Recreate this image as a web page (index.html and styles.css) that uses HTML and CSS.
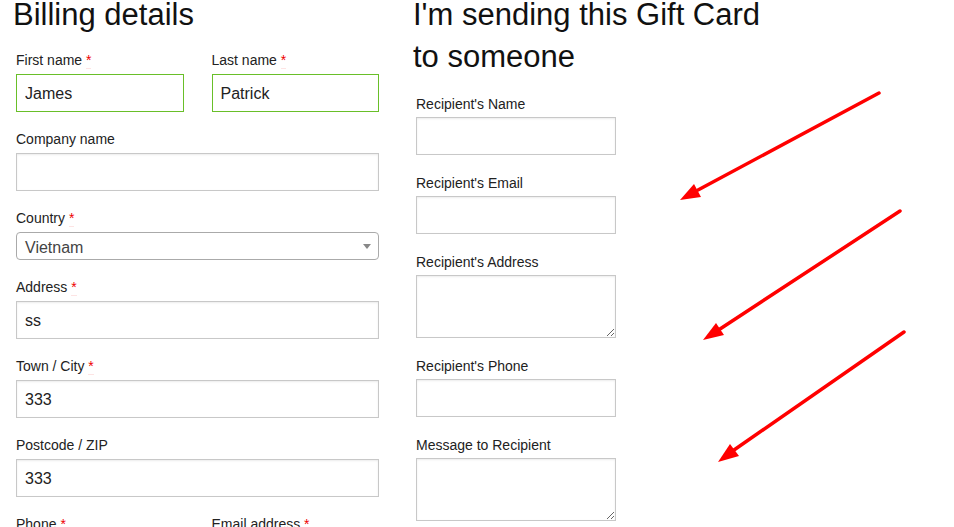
FILE: index.html
```html
<!DOCTYPE html>
<html lang="en">
<head>
  <meta charset="UTF-8" />
  <title>Checkout</title>
  <link rel="stylesheet" href="styles.css">
</head>
<body>

<div class="checkout">
  <div class="col billing">
    <h3>Billing details</h3>

    <div class="row-2">
      <p class="field">
        <label>First name <abbr class="required" title="required">*</abbr></label>
        <input type="text" class="valid" value="James">
      </p>
      <p class="field">
        <label>Last name <abbr class="required" title="required">*</abbr></label>
        <input type="text" class="valid" value="Patrick">
      </p>
    </div>

    <p class="field">
      <label>Company name</label>
      <input type="text" value="">
    </p>

    <p class="field">
      <label>Country <abbr class="required" title="required">*</abbr></label>
      <span class="select-box">Vietnam<span class="select-arrow"></span></span>
    </p>

    <p class="field">
      <label>Address <abbr class="required" title="required">*</abbr></label>
      <input type="text" value="ss">
    </p>

    <p class="field">
      <label>Town / City <abbr class="required" title="required">*</abbr></label>
      <input type="text" value="333">
    </p>

    <p class="field">
      <label>Postcode / ZIP</label>
      <input type="text" value="333">
    </p>

    <div class="row-2">
      <p class="field">
        <label>Phone <abbr class="required" title="required">*</abbr></label>
        <input type="text" value="">
      </p>
      <p class="field">
        <label>Email address <abbr class="required" title="required">*</abbr></label>
        <input type="text" value="">
      </p>
    </div>
  </div>

  <div class="col gift">
    <h3>I'm sending this Gift Card to someone</h3>

    <div class="gift-fields">
      <p class="gift-field">
        <label>Recipient's Name</label>
        <input type="text">
      </p>
      <p class="gift-field">
        <label>Recipient's Email</label>
        <input type="text">
      </p>
      <p class="gift-field">
        <label>Recipient's Address</label>
        <textarea></textarea>
      </p>
      <p class="gift-field">
        <label>Recipient's Phone</label>
        <input type="text">
      </p>
      <p class="gift-field">
        <label>Message to Recipient</label>
        <textarea></textarea>
      </p>
    </div>
  </div>
</div>

<!-- annotation arrows drawn over the screenshot -->
<svg class="arrows" width="954" height="527" viewBox="0 0 954 527">
  <g stroke="#ff0000" stroke-width="3.5" stroke-linecap="round">
    <line x1="879" y1="93" x2="698" y2="190" />
    <line x1="900" y1="211" x2="720" y2="329" />
    <line x1="904" y1="332" x2="734" y2="450" />
  </g>
  <g fill="#ff0000">
    <polygon points="680,200 701,197 694,184" />
    <polygon points="703,340 724,335 716,323" />
    <polygon points="718,462 739,456 730,444" />
  </g>
</svg>

</body>
</html>
```

FILE: styles.css
```css
body {
  margin: 0;
  background: #fff;
  color: #333;
  font-family: "Liberation Sans", Arial, sans-serif;
  overflow: hidden;
}
.checkout {
  display: flex;
  gap: 37px;
  padding-left: 16px;
}
.col {
  width: 363px;
  flex: none;
}
h3 {
  font-weight: normal;
  font-size: 31px;
  color: #111;
  margin: 0;
}
.billing h3 {
  line-height: 30px;
  margin: 0 0 20px -3px;
}
.gift h3 {
  line-height: 42px;
  margin: -6px 0 16px -3px;
}
.row-2 {
  display: flex;
  gap: 28px;
}
.row-2 .field {
  flex: 1;
}
.field {
  margin: 0 0 17px;
}
label {
  display: block;
  font-size: 14px;
  line-height: 20px;
  color: #222;
  margin-bottom: 4px;
}
abbr.required {
  color: #e00;
  text-decoration: none;
  border-bottom: 1px solid #fde4e4;
}
input, textarea, .select-box {
  display: block;
  box-sizing: border-box;
  width: 100%;
  font-family: "Liberation Sans", Arial, sans-serif;
  font-size: 16px;
  color: #222;
  background: #fff;
  border: 1px solid #c8c8c8;
  box-shadow: inset 0 1px 2px rgba(0, 0, 0, 0.08);
  margin: 0;
}
input {
  height: 38px;
  padding: 1px 8px 0;
  outline: none;
}
input.valid {
  border-color: #69bf29;
  box-shadow: none;
}
.select-box {
  position: relative;
  height: 28px;
  line-height: 26px;
  padding: 2px 8px 0;
  color: #444;
  border-color: #aaa;
  border-radius: 4px;
  box-shadow: none;
}
.select-arrow {
  position: absolute;
  right: 7px;
  top: 11px;
  border-left: 4px solid transparent;
  border-right: 4px solid transparent;
  border-top: 5px solid #888;
}
.gift-field {
  width: 200px;
  margin: 0 0 18px;
}
.gift-field label {
  margin-bottom: 3px;
}
textarea {
  height: 63px;
  resize: vertical;
  padding: 4px 8px;
}
.arrows {
  position: absolute;
  left: 0;
  top: 0;
  pointer-events: none;
}
```
